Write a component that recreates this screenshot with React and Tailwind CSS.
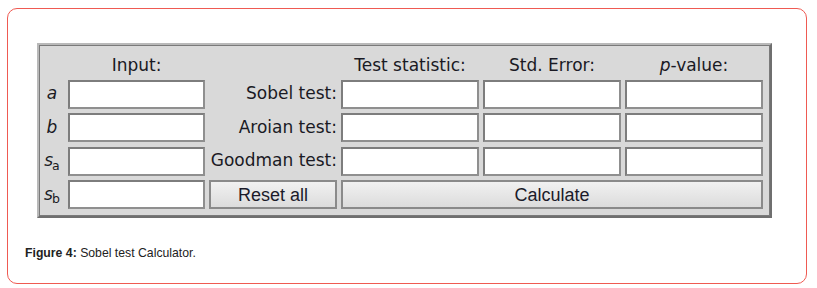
import React from 'react'

const headers = ['Test statistic:', 'Std. Error:']

function Box() {
  return <div className="h-full bg-white border-2 border-t-[#7d7d7d] border-l-[#7d7d7d] border-b-[#8f8f8f] border-r-[#8f8f8f]" />
}

function Sym({ s, sub }) {
  return (
    <div className="flex items-center justify-center h-full italic text-[17px]">
      {s}
      {sub && <span className="not-italic text-[12.5px] relative top-[5px] -ml-[1px]">{sub}</span>}
    </div>
  )
}

function Label({ text }) {
  return <div className="flex items-center justify-end h-full text-[17px]">{text}</div>
}

function Btn({ children, className }) {
  return (
    <button className={"h-full bg-gradient-to-b from-[#f1f1f1] to-[#dcdcdc] border-2 border-[#8a8a8a] text-[18px] text-[#1b1b2a] leading-none " + (className || '')} style={{ fontFamily: '"Liberation Sans", Arial, sans-serif' }}>
      {children}
    </button>
  )
}

export default function App() {
  return (
    <div className="pl-[7px] pt-[8px] bg-white">
      <div className="w-[800px] h-[276px] border border-[#ef5a52] rounded-[10px] bg-white flex flex-col pt-[34px] pl-[17px]">
        <div className="ml-[12px] w-[735px] border-2 border-t-[#b9b9b9] border-l-[#b9b9b9] border-b-[#6f6f6f] border-r-[#6f6f6f]">
          <div
            className="border border-[#7a7a7a] bg-[#d9d9d9] pr-[5px] pb-[6px] pt-[1px] grid grid-cols-[24px_137px_128px_138px_138px_138px] grid-rows-[28px_29px_29px_29px_29px] gap-x-[4px] gap-y-[4.5px] text-[#1a1a24]"
            style={{ fontFamily: '"DejaVu Sans", Verdana, sans-serif' }}
          >
            {/* header row */}
            <div />
            <div className="flex items-end justify-center text-[17px] leading-[20px]">Input:</div>
            <div />
            {headers.map(h => (
              <div key={h} className="flex items-end justify-center text-[17px] leading-[20px]">{h}</div>
            ))}
            <div className="flex items-end justify-center text-[17px] leading-[20px]"><i>p</i>-value:</div>

            {/* a */}
            <Sym s="a" />
            <Box />
            <Label text="Sobel test:" />
            <Box /><Box /><Box />

            {/* b */}
            <Sym s="b" />
            <Box />
            <Label text="Aroian test:" />
            <Box /><Box /><Box />

            {/* sa */}
            <Sym s="s" sub="a" />
            <Box />
            <Label text="Goodman test:" />
            <Box /><Box /><Box />

            {/* sb */}
            <Sym s="s" sub="b" />
            <Box />
            <Btn>Reset all</Btn>
            <Btn className="col-span-3">Calculate</Btn>
          </div>
        </div>
        <p className="mt-[27px] text-[12.25px] leading-[16px] text-[#222]" style={{ fontFamily: '"Liberation Sans", Arial, sans-serif' }}>
          <b>Figure 4:</b> Sobel test Calculator.
        </p>
      </div>
    </div>
  )
}
